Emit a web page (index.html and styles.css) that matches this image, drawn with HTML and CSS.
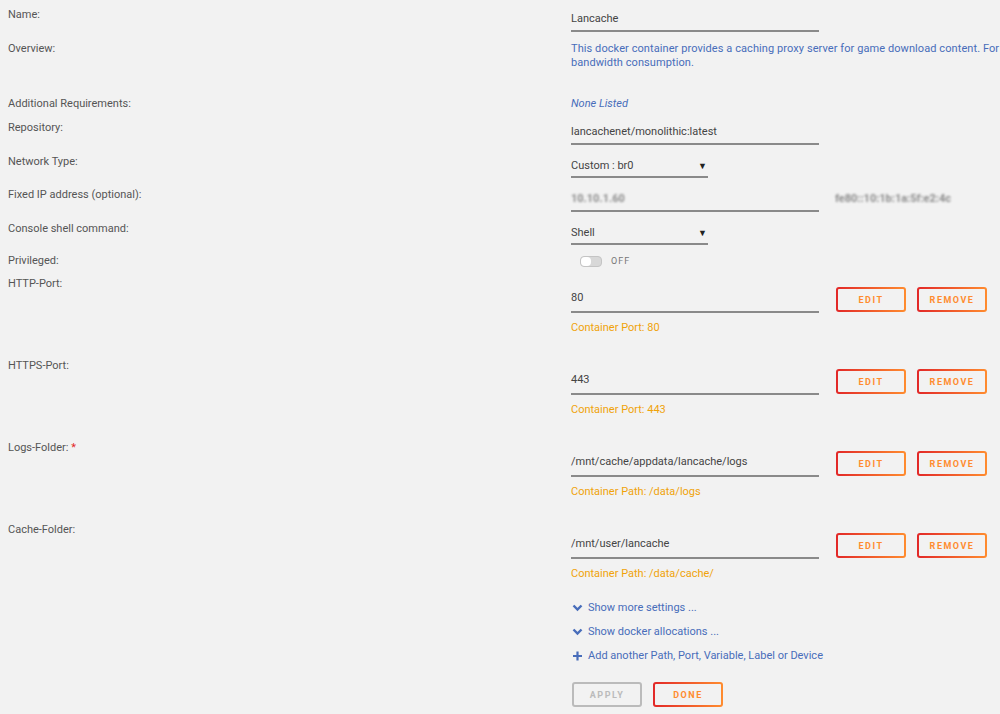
FILE: index.html
```html
<!DOCTYPE html>
<html lang="en">
<head>
    <meta charset="UTF-8">
    <meta name="viewport" content="width=device-width, initial-scale=1.0">
    <title>Update Container</title>
    <link rel="stylesheet" href="styles.css">
</head>
<body>
    <div class="form">
        <div class="row">
            <div class="label">Name:</div>
            <div class="value"><div class="field">Lancache</div></div>
        </div>
        <div class="row overview">
            <div class="label">Overview:</div>
            <div class="value blue desc-text">This docker container provides a caching proxy server for game download content. For any network with more than one PC gamer connected this will drastically reduce internet<br>bandwidth consumption.</div>
        </div>
        <div class="row">
            <div class="label">Additional Requirements:</div>
            <div class="value blue italic">None Listed</div>
        </div>
        <div class="row">
            <div class="label">Repository:</div>
            <div class="value"><div class="field">lancachenet/monolithic:latest</div></div>
        </div>
        <div class="row">
            <div class="label">Network Type:</div>
            <div class="value"><div class="select">Custom : br0 <span class="caret">&#9660;</span></div></div>
        </div>
        <div class="row">
            <div class="label">Fixed IP address (optional):</div>
            <div class="value ip-row">
                <div class="field"><span class="blurred">10.10.1.60</span></div>
                <span class="blurred mac">fe80::10:1b:1a:5f:e2:4c</span>
            </div>
        </div>
        <div class="row">
            <div class="label">Console shell command:</div>
            <div class="value"><div class="select">Shell <span class="caret">&#9660;</span></div></div>
        </div>
        <div class="row privileged">
            <div class="label">Privileged:</div>
            <div class="value toggle-wrap"><span class="toggle"><span class="knob"></span></span><span class="off">OFF</span></div>
        </div>

        <div class="row port">
            <div class="label">HTTP-Port:</div>
            <div class="value">
                <div class="port-line">
                    <div class="field port-field">80</div>
                    <button class="btn">EDIT</button>
                    <button class="btn">REMOVE</button>
                </div>
                <div class="orange">Container Port: 80</div>
            </div>
        </div>
        <div class="row port">
            <div class="label">HTTPS-Port:</div>
            <div class="value">
                <div class="port-line">
                    <div class="field port-field">443</div>
                    <button class="btn">EDIT</button>
                    <button class="btn">REMOVE</button>
                </div>
                <div class="orange">Container Port: 443</div>
            </div>
        </div>
        <div class="row port">
            <div class="label">Logs-Folder: <span class="req">*</span></div>
            <div class="value">
                <div class="port-line">
                    <div class="field port-field">/mnt/cache/appdata/lancache/logs</div>
                    <button class="btn">EDIT</button>
                    <button class="btn">REMOVE</button>
                </div>
                <div class="orange">Container Path: /data/logs</div>
            </div>
        </div>
        <div class="row port">
            <div class="label">Cache-Folder:</div>
            <div class="value">
                <div class="port-line">
                    <div class="field port-field">/mnt/user/lancache</div>
                    <button class="btn">EDIT</button>
                    <button class="btn">REMOVE</button>
                </div>
                <div class="orange">Container Path: /data/cache/</div>
            </div>
        </div>

        <div class="links">
            <div class="link">
                <svg width="11" height="8" viewBox="0 0 11 8"><path d="M1.5 1.5 L5.5 5.5 L9.5 1.5" fill="none" stroke="#486dba" stroke-width="2.4"/></svg>
                Show more settings ...
            </div>
            <div class="link">
                <svg width="11" height="8" viewBox="0 0 11 8"><path d="M1.5 1.5 L5.5 5.5 L9.5 1.5" fill="none" stroke="#486dba" stroke-width="2.4"/></svg>
                Show docker allocations ...
            </div>
            <div class="link">
                <svg width="11" height="10" viewBox="0 0 11 10"><path d="M5.5 0.5 V9.5 M1 5 H10" fill="none" stroke="#486dba" stroke-width="2.2"/></svg>
                Add another Path, Port, Variable, Label or Device
            </div>
        </div>

        <div class="actions">
            <button class="btn disabled">APPLY</button>
            <button class="btn">DONE</button>
        </div>
    </div>
</body>
</html>
```

FILE: styles.css
```css
html {
    overflow: hidden;
}
body {
    margin: 0;
    background-color: #f2f2f2;
    font-family: Roboto, "Liberation Sans", sans-serif;
    font-size: 11px;
    color: #555;
}
.form {
    display: flex;
    flex-direction: column;
    gap: 10px;
    padding: 8px 0 0 8px;
}
.row {
    display: flex;
}
.label {
    width: 563px;
    flex-shrink: 0;
    line-height: 14px;
}
.value {
    line-height: 14px;
    color: #444;
}
.field {
    width: 248px;
    padding: 4px 0 4px 0;
    border-bottom: 2px solid #8a8a8a;
    font-size: 11px;
    color: #444;
}
.select {
    width: 137px;
    padding: 4px 0 3px 0;
    border-bottom: 2px solid #8a8a8a;
    position: relative;
    color: #444;
}
.caret {
    position: absolute;
    right: 1px;
    top: 4px;
    font-size: 9px;
    color: #222;
}
.blue {
    color: #486dba;
}
.italic {
    font-style: italic;
}
.desc-text {
    white-space: nowrap;
    letter-spacing: 0.08px;
}
.overview {
    margin-bottom: 17px;
}
.ip-row {
    display: flex;
    align-items: center;
    gap: 16px;
}
.blurred {
    filter: blur(1.1px);
    color: #8c8c8c;
    font-weight: bold;
}
.mac {
    margin-top: -2px;
}
.privileged {
    margin-top: -1px;
    margin-bottom: -1px;
}
.toggle-wrap {
    display: flex;
    align-items: center;
    gap: 9px;
    padding-left: 9px;
}
.toggle {
    width: 20px;
    height: 9px;
    border: 1px solid #c4c4c4;
    border-radius: 4px;
    background-color: #d8d8d8;
    position: relative;
}
.knob {
    position: absolute;
    left: 0;
    top: 0;
    width: 10px;
    height: 9px;
    border-radius: 4px;
    background-color: #fff;
}
.off {
    font-size: 9px;
    letter-spacing: 1px;
    color: #777;
}
.port .value {
    padding-top: 10px;
}
.port {
    margin-bottom: 14px;
}
.port-line {
    display: flex;
    align-items: flex-end;
}
.port-field {
    padding-bottom: 6px;
}
.port-line .btn {
    margin-left: 11px;
    margin-bottom: 1px;
}
.port-line .btn:first-of-type {
    margin-left: 17px;
}
.btn {
    width: 70px;
    height: 25px;
    border: 2px solid transparent;
    border-radius: 3px;
    background: linear-gradient(#f2f2f2, #f2f2f2) padding-box,
                linear-gradient(90deg, #e22828 0, #ff8c2f) border-box;
    color: #ff8c2f;
    font-family: Roboto, "Liberation Sans", sans-serif;
    font-size: 9px;
    font-weight: bold;
    letter-spacing: 1.5px;
    padding: 0;
    cursor: pointer;
}
.btn.disabled {
    background: transparent;
    border-color: #bbb;
    color: #bbb;
}
.orange {
    margin-top: 8px;
    color: #f0a30a;
}
.req {
    color: #e22828;
}
.links {
    display: flex;
    flex-direction: column;
    gap: 10px;
    padding-left: 564px;
    margin-top: -4px;
}
.link {
    display: flex;
    align-items: center;
    gap: 5px;
    line-height: 14px;
    color: #486dba;
}
.actions {
    display: flex;
    gap: 11px;
    padding-left: 564px;
    margin-top: 9px;
}
```
